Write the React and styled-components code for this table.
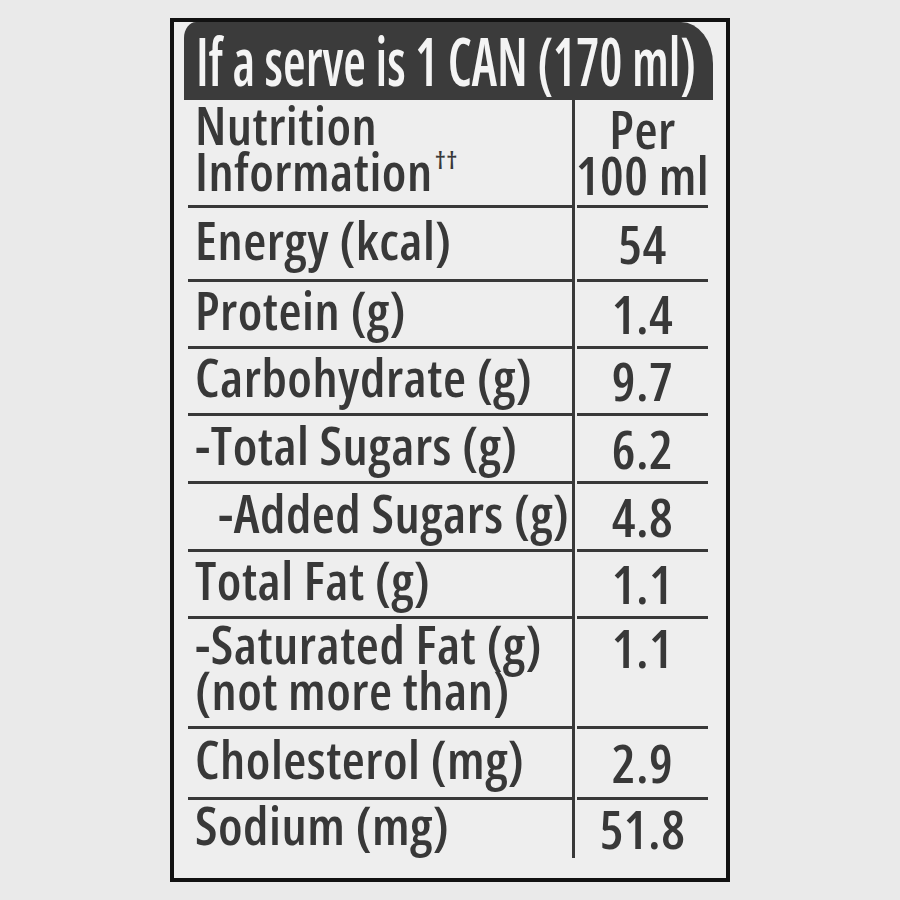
import React from 'react';
import styled, { createGlobalStyle } from 'styled-components';

const Global = createGlobalStyle`
  html, body { margin: 0; background: #eaeaea; }
`;

const rows = [
  { label: 'Energy (kcal)', value: '54', h: 74 },
  { label: 'Protein (g)', value: '1.4', h: 67 },
  { label: 'Carbohydrate (g)', value: '9.7', h: 67 },
  { label: '-Total Sugars (g)', value: '6.2', h: 68 },
  { label: '-Added Sugars (g)', value: '4.8', h: 68, indent: true },
  { label: 'Total Fat (g)', value: '1.1', h: 67 },
  { label: ['-Saturated Fat (g)', '(not more than)'], value: '1.1', h: 110, top: true },
  { label: 'Cholesterol (mg)', value: '2.9', h: 71 },
  { label: 'Sodium (mg)', value: '51.8', h: 58, last: true },
];

export default function App() {
  return (
    <Page>
      <Global />
      <Label>
        <Band>
          <BandText>If a serve is 1 CAN (170 ml)</BandText>
        </Band>
        <Table>
          <Row $h={108}>
            <NameCell $top>
              <span>Nutrition</span>
              <span>Information<Sup>††</Sup></span>
            </NameCell>
            <ValueCell $top $center>
              <span>Per</span>
              <span>100 ml</span>
            </ValueCell>
          </Row>
          {rows.map((r, i) => (
            <Row key={i} $h={r.h}>
              <NameCell $top={r.top} $indent={r.indent} $last={r.last}>
                {Array.isArray(r.label)
                  ? r.label.map((l) => <span key={l}>{l}</span>)
                  : r.label}
              </NameCell>
              <ValueCell $top={r.top} $last={r.last}>{r.value}</ValueCell>
            </Row>
          ))}
        </Table>
      </Label>
    </Page>
  );
}

const Page = styled.div`
  width: 900px;
  height: 900px;
  display: flex;
  align-items: center;
  justify-content: center;
  font-family: "Open Sans", "Liberation Sans", sans-serif;
  font-stretch: 75%;
`;

const Label = styled.div`
  box-sizing: border-box;
  width: 560px;
  height: 864px;
  border: 4px solid #121212;
  background: #eeeeee;
  padding: 0 18px 20px 14px;
  display: flex;
  flex-direction: column;
`;

const Band = styled.div`
  height: 78px;
  margin: 0 -5px 0 -4px;
  background: #3b3b3b;
  border-radius: 12px 32px 0 0 / 16px 42px 0 0;
  display: flex;
  align-items: center;
  padding: 0 0 2px 12px;
`;

const BandText = styled.span`
  display: inline-block;
  color: #f4f4f4;
  font-size: 67px;
  font-weight: 600;
  line-height: 67px;
  white-space: nowrap;
  margin-right: -140px;
  transform: scaleX(0.775);
  transform-origin: left center;
`;

const Table = styled.div`
  display: flex;
  flex-direction: column;
`;

const Row = styled.div`
  display: grid;
  grid-template-columns: 387px 133px;
  height: ${(p) => p.$h}px;
`;

const Cell = styled.div`
  box-sizing: border-box;
  display: flex;
  flex-direction: column;
  color: #383838;
  font-size: 53px;
  font-weight: 600;
  line-height: 46px;
  letter-spacing: 0.5px;
  white-space: nowrap;
  border-bottom: ${(p) => (p.$last ? 'none' : '3px solid #383838')};
`;

const NameCell = styled(Cell)`
  border-right: 3px solid #383838;
  justify-content: ${(p) => (p.$top ? 'flex-start' : 'center')};
  padding: ${(p) => (p.$top ? '2px' : '0')} 0 8px ${(p) => (p.$indent ? 30 : 7)}px;
`;

const ValueCell = styled(Cell)`
  align-items: center;
  justify-content: ${(p) => (p.$top ? 'flex-start' : 'center')};
  padding-top: ${(p) => (p.$top ? '6px' : '0')};
  margin-left: 2px;
`;

const Sup = styled.sup`
  font-size: 24px;
  line-height: 0;
  vertical-align: 22px;
  margin-left: 2px;
`;
